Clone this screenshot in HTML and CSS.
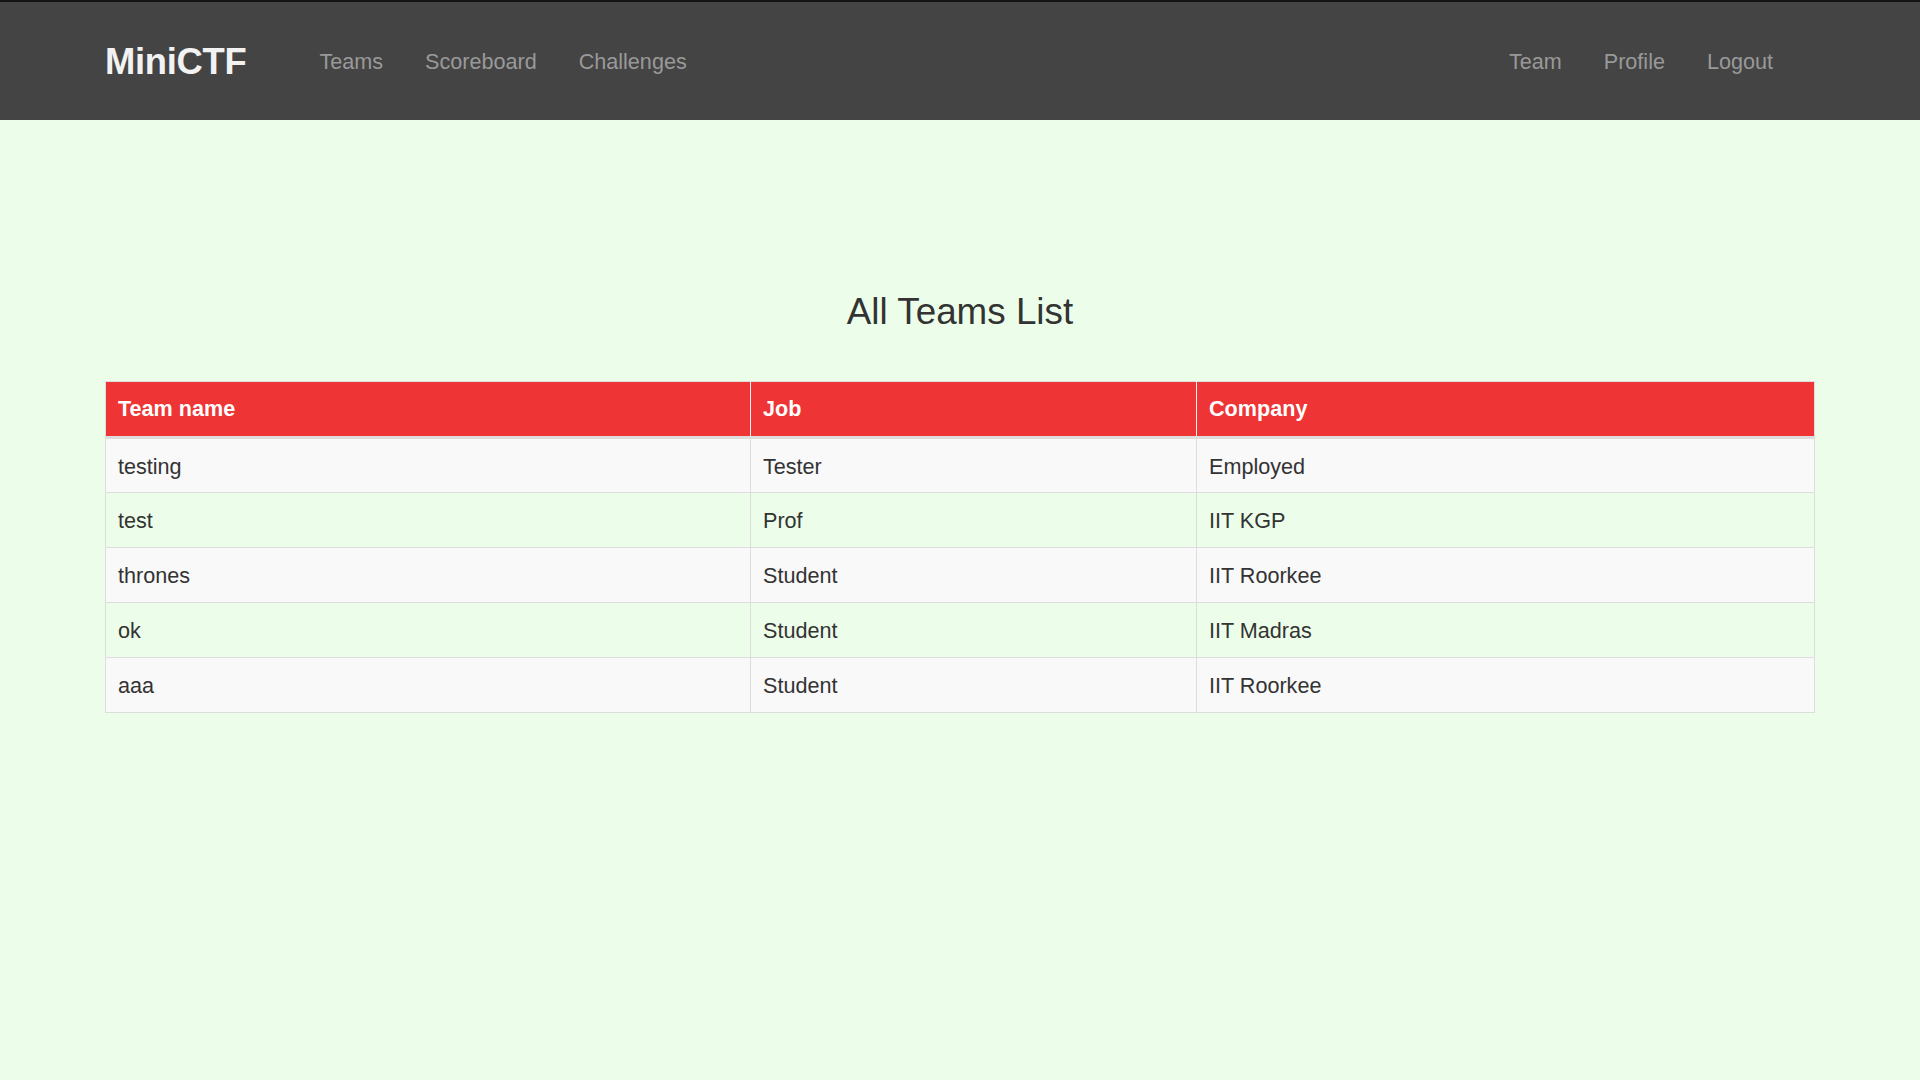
FILE: index.html
```html
<!DOCTYPE html>
<html lang="en">
<head>
<meta charset="utf-8">
<title>MiniCTF - Teams</title>
<link rel="stylesheet" href="styles.css">
</head>
<body>
<nav class="navbar">
  <div class="nav-inner">
    <a class="brand" href="#">MiniCTF</a>
    <ul class="nav-links">
      <li><a href="#">Teams</a></li>
      <li><a href="#">Scoreboard</a></li>
      <li><a href="#">Challenges</a></li>
    </ul>
    <ul class="nav-links nav-right">
      <li><a href="#">Team</a></li>
      <li><a href="#">Profile</a></li>
      <li><a href="#">Logout</a></li>
    </ul>
  </div>
</nav>
<main class="container">
  <h2 class="page-title">All Teams List</h2>
  <table class="teams-table">
    <colgroup>
      <col class="col-name">
      <col class="col-job">
      <col class="col-company">
    </colgroup>
    <thead>
      <tr><th>Team name</th><th>Job</th><th>Company</th></tr>
    </thead>
    <tbody>
      <tr><td>testing</td><td>Tester</td><td>Employed</td></tr>
      <tr><td>test</td><td>Prof</td><td>IIT KGP</td></tr>
      <tr><td>thrones</td><td>Student</td><td>IIT Roorkee</td></tr>
      <tr><td>ok</td><td>Student</td><td>IIT Madras</td></tr>
      <tr><td>aaa</td><td>Student</td><td>IIT Roorkee</td></tr>
    </tbody>
  </table>
</main>
</body>
</html>
```
FILE: styles.css
```css
* { box-sizing: border-box; }

html, body {
  margin: 0;
  padding: 0;
}

body {
  background: #ecfeea;
  font-family: "Liberation Sans", Arial, sans-serif;
  font-size: 21.6px;
  color: #333333;
  min-height: 1080px;
}

.navbar {
  background: #444444;
  border-top: 2px solid #141414;
  height: 120px;
}

.nav-inner {
  width: 1710px;
  margin: 0 auto;
  height: 100%;
  display: flex;
  align-items: center;
  padding-top: 2px;
}

.brand {
  font-size: 36.4px;
  font-weight: bold;
  color: #f2f2f2;
  text-decoration: none;
  letter-spacing: -0.3px;
  margin-right: 52px;
}

.nav-links {
  list-style: none;
  margin: 0;
  padding: 0;
  display: flex;
}

.nav-links a {
  display: block;
  padding: 0 21px;
  color: #999999;
  text-decoration: none;
  font-size: 21.6px;
  line-height: 30px;
}

.nav-right {
  margin-left: auto;
  margin-right: 21px;
}

.container {
  width: 1710px;
  margin: 0 auto;
}

.page-title {
  text-align: center;
  font-size: 36.8px;
  font-weight: normal;
  line-height: 40px;
  margin: 172px 0 49px;
  color: #333333;
}

.teams-table {
  width: 100%;
  border-collapse: collapse;
  table-layout: fixed;
  border: 1px solid #dddddd;
}

.col-name { width: 645px; }
.col-job { width: 446px; }

.teams-table th {
  background: #ee3434;
  color: #ffffff;
  font-weight: bold;
  font-size: 21.6px;
  text-align: left;
  height: 56px;
  padding: 0 12px;
  border-left: 1px solid #f4f4f4;
  border-bottom: 3px solid #dddddd;
}

.teams-table th:first-child { border-left: 1px solid #dddddd; }

.teams-table td {
  height: 55px;
  padding: 2px 12px 0;
  border: 1px solid #dddddd;
}

.teams-table tbody tr:nth-child(odd) td {
  background: #f9f9f9;
}
```
